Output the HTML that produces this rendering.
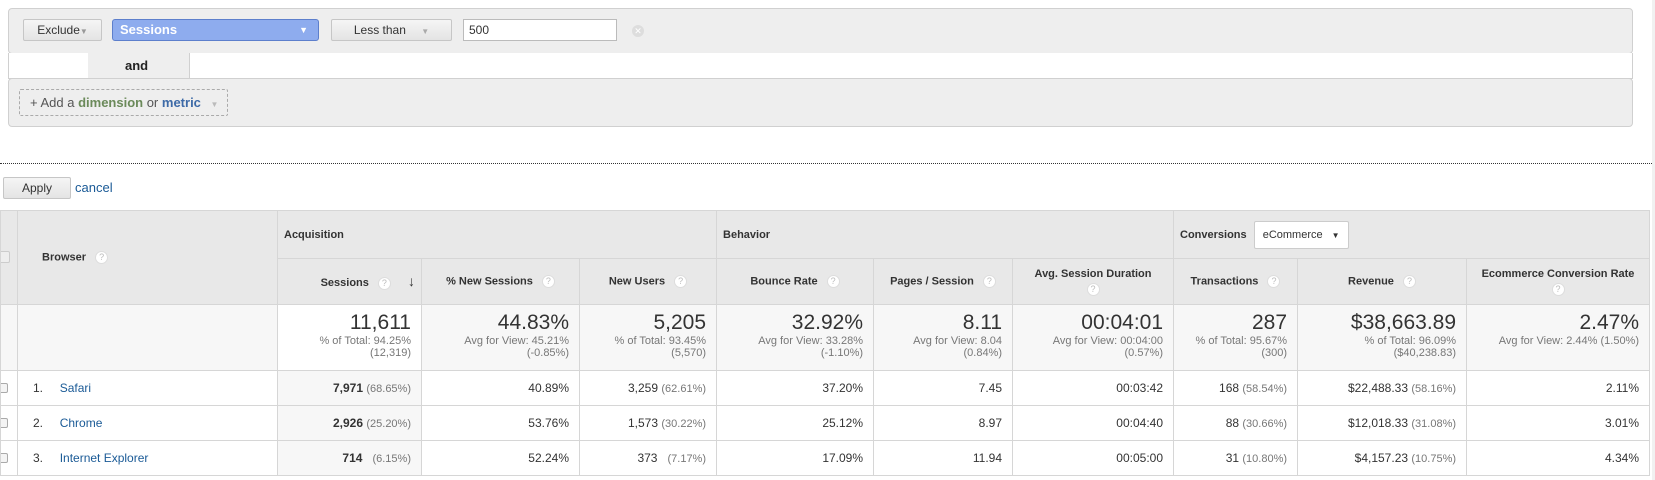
<!DOCTYPE html>
<html><head><meta charset="utf-8"><style>
*{box-sizing:border-box;margin:0;padding:0}
body{width:1655px;height:480px;overflow:hidden;background:#fff;font-family:"Liberation Sans",Arial,sans-serif;font-size:12px;color:#333;position:relative}
.a{position:absolute}
.box{background:#eee;border:1px solid #d0d0d0;border-radius:4px}
.btn{background:linear-gradient(#f5f5f5,#e4e4e4);border:1px solid #c6c6c6;border-radius:2px;font-size:12px;color:#333;text-align:center}
.q{display:inline-block;width:13px;height:13px;border-radius:50%;border:1px solid #ddd;background:#fff;color:#bbb;font-size:9px;line-height:11px;text-align:center;vertical-align:middle;margin-left:6px;font-weight:normal}
table{position:absolute;left:0;top:210px;width:1649px;border-collapse:collapse;table-layout:fixed}
td{border:1px solid #d6d6d6;padding:0 10px;vertical-align:middle;overflow:hidden;white-space:nowrap}
.h td{background:#e8e8e8;font-weight:bold;font-size:11px;color:#333}
.tot td{background:#f7f7f7;text-align:right;color:#777;font-size:11px;line-height:12px;padding-top:6px;vertical-align:top}
.big{font-size:21px;color:#333;line-height:24px;display:block}
.r td{text-align:right;font-size:12px;color:#333;height:35px}
.p{color:#777;font-size:11px}
a{color:#1a5a96;text-decoration:none}
.cb{width:10px;height:10px;border:1px solid #aaa;border-radius:2px;background:#f4f4f4;position:absolute;left:-3px}
</style></head><body>
<div class="a box" style="left:8px;top:8px;width:1625px;height:46px"></div>
<div class="a btn" style="left:23px;top:19px;width:79px;height:22px;line-height:20px">Exclude<span style="color:#999;font-size:8px">▼</span></div>
<div class="a" style="left:112px;top:19px;width:207px;height:22px;background:#8eacee;border:1px solid #5d7fcc;border-radius:3px;color:#fff;font-weight:bold;line-height:20px;padding-left:7px;font-size:13px">Sessions<span style="position:absolute;right:10px;font-size:9px">▼</span></div>
<div class="a btn" style="left:331px;top:19px;width:121px;height:22px;line-height:20px">Less than <span style="color:#aaa;font-size:8px;margin-left:12px">▼</span></div>
<div class="a" style="left:463px;top:19px;width:154px;height:22px;background:#fff;border:1px solid #bbb;line-height:20px;padding-left:5px">500</div>
<div class="a" style="left:632px;top:25px;width:12px;height:12px;border-radius:50%;background:#ddd;color:#fff;font-size:9px;line-height:12px;text-align:center">✕</div>
<div class="a" style="left:8px;top:53px;width:81px;height:26px;border:1px solid #d0d0d0;border-top:none;background:#fff"></div>
<div class="a" style="left:88px;top:52px;width:102px;height:27px;background:#eee"></div>
<div class="a" style="left:125px;top:58px;font-weight:bold;font-size:13px;color:#222">and</div>
<div class="a" style="left:189px;top:53px;width:1444px;height:26px;border:1px solid #d0d0d0;border-top:none;background:#fff"></div>
<div class="a box" style="left:8px;top:78px;width:1625px;height:49px"></div>
<div class="a" style="left:19px;top:89px;width:209px;height:27px;border:1px dashed #aaa;border-radius:2px;line-height:25px;padding-left:10px;color:#555;font-size:13px">+ Add a <b style="color:#6b8a5a">dimension</b> or <b style="color:#3d6aa7">metric</b> <span style="color:#bbb;font-size:8px;margin-left:6px">▼</span></div>
<div class="a" style="left:0;top:163px;width:1652px;border-top:1px dotted #333"></div>
<div class="a" style="left:1652px;top:0;width:3px;height:480px;background:#f1f1f1"></div>
<div class="a btn" style="left:3px;top:177px;width:68px;height:22px;line-height:20px">Apply</div>
<div class="a" style="left:75px;top:180px;font-size:13px"><a>cancel</a></div>
<table>
<colgroup><col style="width:17px"><col style="width:260px"><col style="width:144px"><col style="width:158px"><col style="width:137px"><col style="width:157px"><col style="width:139px"><col style="width:161px"><col style="width:124px"><col style="width:169px"><col style="width:183px"></colgroup>
<tr class="h" style="height:48px"><td rowspan="2" style="position:relative;padding:0"><div class="cb" style="top:40px;width:12px;height:12px;border-color:#ccc;background:#eee"></div></td><td rowspan="2" style="padding-left:24px">Browser <span class="q">?</span></td>
<td colspan="3" style="padding-left:6px">Acquisition</td><td colspan="3" style="padding-left:6px">Behavior</td><td colspan="3" style="padding-left:6px">Conversions <span style="display:inline-block;margin-left:4px;background:#fff;border:1px solid #ccc;border-radius:2px;font-weight:normal;padding:7px 8px;font-size:11px">eCommerce <span style="font-size:8px;margin-left:6px">▼</span></span></td></tr>
<tr class="h" style="height:46px;text-align:center"><td style="text-align:right;padding-right:6px">Sessions <span class="q">?</span> <span style="font-size:14px;margin-left:14px;font-weight:normal">↓</span></td><td style="text-align:center">% New Sessions <span class="q">?</span></td><td style="text-align:center">New Users <span class="q">?</span></td><td style="text-align:center">Bounce Rate <span class="q">?</span></td><td style="text-align:center">Pages / Session <span class="q">?</span></td><td style="text-align:center;line-height:16px">Avg. Session Duration<br><span class="q" style="margin:0">?</span></td><td style="text-align:center">Transactions <span class="q">?</span></td><td style="text-align:center">Revenue <span class="q">?</span></td><td style="text-align:center;line-height:16px">Ecommerce Conversion Rate<br><span class="q" style="margin:0">?</span></td></tr>
<tr class="tot" style="height:66px"><td></td><td></td>
<td style="background:#fff"><span class="big">11,611</span>% of Total: 94.25%<br>(12,319)</td>
<td><span class="big">44.83%</span>Avg for View: 45.21%<br>(-0.85%)</td>
<td><span class="big">5,205</span>% of Total: 93.45%<br>(5,570)</td>
<td><span class="big">32.92%</span>Avg for View: 33.28%<br>(-1.10%)</td>
<td><span class="big">8.11</span>Avg for View: 8.04<br>(0.84%)</td>
<td><span class="big">00:04:01</span>Avg for View: 00:04:00<br>(0.57%)</td>
<td><span class="big">287</span>% of Total: 95.67%<br>(300)</td>
<td><span class="big">$38,663.89</span>% of Total: 96.09%<br>($40,238.83)</td>
<td><span class="big">2.47%</span>Avg for View: 2.44% (1.50%)</td></tr>
<tr class="r"><td style="position:relative;padding:0"><div class="cb" style="top:12px"></div></td><td style="text-align:left;padding-left:15px">1.&nbsp;&nbsp;&nbsp;&nbsp; <a>Safari</a></td><td style="background:#f7f7f7"><b>7,971</b> <span class="p">(68.65%)</span></td><td>40.89%</td><td>3,259 <span class="p">(62.61%)</span></td><td>37.20%</td><td>7.45</td><td>00:03:42</td><td>168 <span class="p">(58.54%)</span></td><td>$22,488.33 <span class="p">(58.16%)</span></td><td>2.11%</td></tr>
<tr class="r"><td style="position:relative;padding:0"><div class="cb" style="top:12px"></div></td><td style="text-align:left;padding-left:15px">2.&nbsp;&nbsp;&nbsp;&nbsp; <a>Chrome</a></td><td style="background:#f7f7f7"><b>2,926</b> <span class="p">(25.20%)</span></td><td>53.76%</td><td>1,573 <span class="p">(30.22%)</span></td><td>25.12%</td><td>8.97</td><td>00:04:40</td><td>88 <span class="p">(30.66%)</span></td><td>$12,018.33 <span class="p">(31.08%)</span></td><td>3.01%</td></tr>
<tr class="r"><td style="position:relative;padding:0"><div class="cb" style="top:12px"></div></td><td style="text-align:left;padding-left:15px">3.&nbsp;&nbsp;&nbsp;&nbsp; <a>Internet Explorer</a></td><td style="background:#f7f7f7"><b>714</b> &nbsp;&nbsp;<span class="p">(6.15%)</span></td><td>52.24%</td><td>373 &nbsp;&nbsp;<span class="p">(7.17%)</span></td><td>17.09%</td><td>11.94</td><td>00:05:00</td><td>31 <span class="p">(10.80%)</span></td><td>$4,157.23 <span class="p">(10.75%)</span></td><td>4.34%</td></tr>
</table>
</body></html>
